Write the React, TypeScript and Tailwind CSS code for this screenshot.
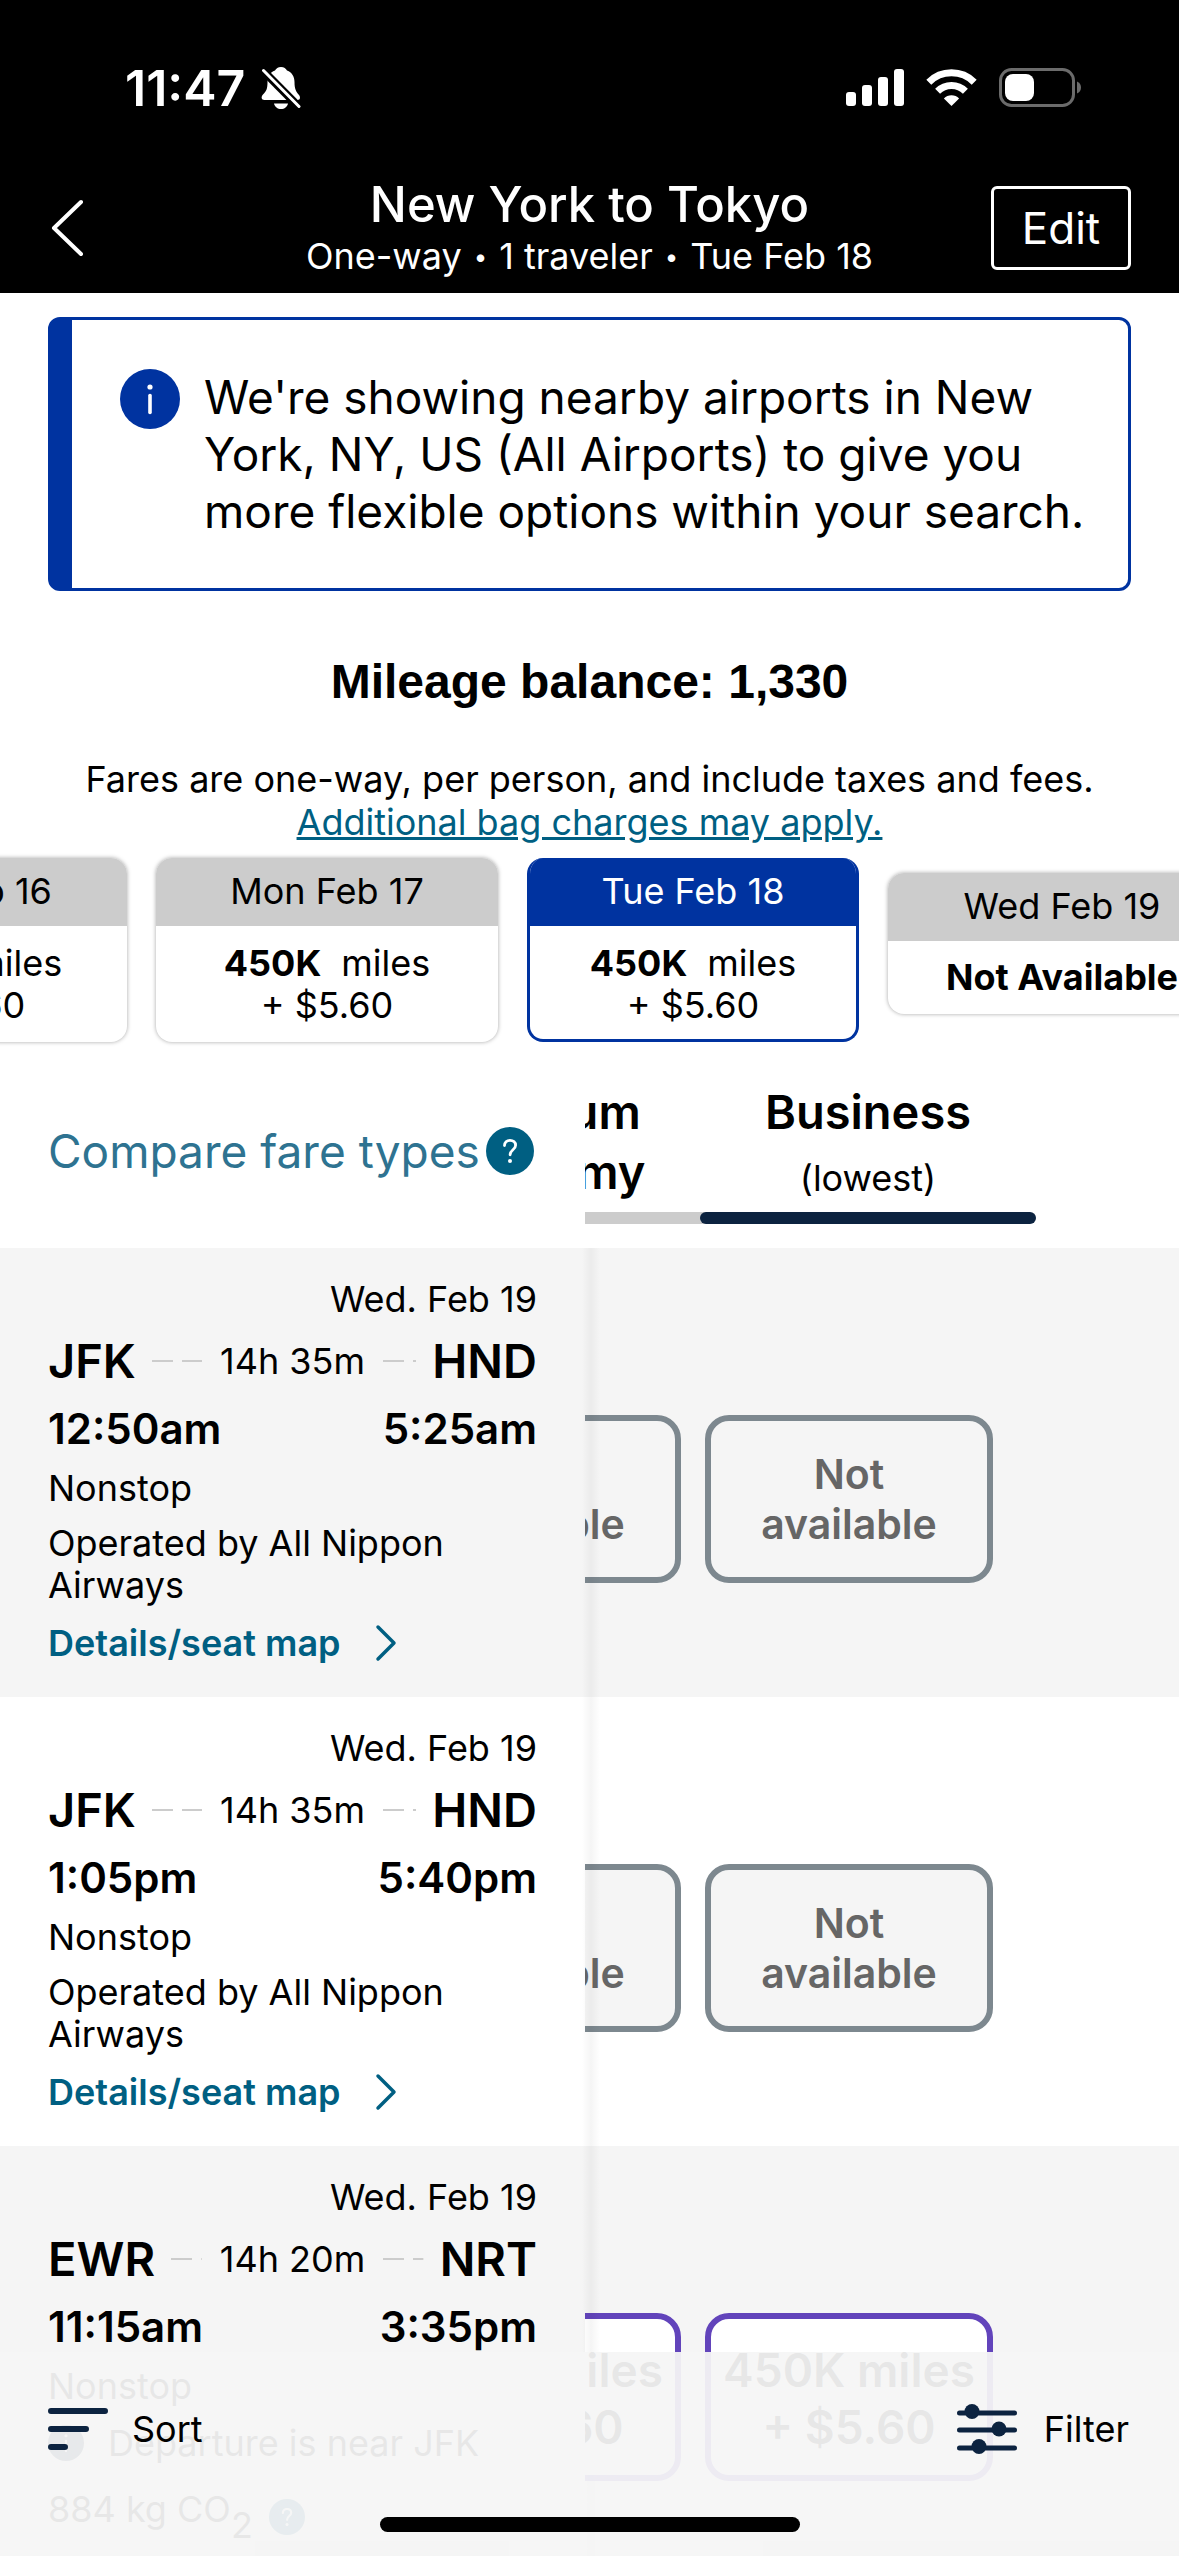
import { useState } from 'react'
import clsx from 'clsx'

interface DateFare {
  day: string
  miles?: string
  taxes?: string
  width: string
}

interface Flight {
  id: number
  arrivalDate: string
  from: string
  to: string
  duration: string
  departs: string
  arrives: string
  operator?: string
  notice?: string
  co2?: string
  miles?: string
  taxes?: string
}

const dateFares: DateFare[] = [
  { day: 'Sun Feb 16', miles: '450K', taxes: '+ $5.60', width: 'w-[336px]' },
  { day: 'Mon Feb 17', miles: '450K', taxes: '+ $5.60', width: 'w-[342px]' },
  { day: 'Tue Feb 18', miles: '450K', taxes: '+ $5.60', width: 'w-[332px]' },
  { day: 'Wed Feb 19', width: 'w-[348px]' },
]

const flights: Flight[] = [
  {
    id: 1,
    arrivalDate: 'Wed. Feb 19',
    from: 'JFK',
    to: 'HND',
    duration: '14h 35m',
    departs: '12:50am',
    arrives: '5:25am',
    operator: 'Operated by All Nippon Airways',
  },
  {
    id: 2,
    arrivalDate: 'Wed. Feb 19',
    from: 'JFK',
    to: 'HND',
    duration: '14h 35m',
    departs: '1:05pm',
    arrives: '5:40pm',
    operator: 'Operated by All Nippon Airways',
  },
  {
    id: 3,
    arrivalDate: 'Wed. Feb 19',
    from: 'EWR',
    to: 'NRT',
    duration: '14h 20m',
    departs: '11:15am',
    arrives: '3:35pm',
    notice: 'Departure is near JFK',
    co2: '884 kg CO',
    miles: '450K miles',
    taxes: '+ $5.60',
  },
]

function BellOffIcon() {
  return (
    <svg width="40" height="44" viewBox="0 0 40 44" fill="#fff">
      <path d="M20 1c3 0 5 1.600 6 3.500 5 2 7.500 6 7.500 11.500 0 7 1.500 9.500 4.500 13 1.500 1.800 1.500 5-1.500 5H3.500C0 34 0 30.500 2 28.500c3.500-3.500 4.500-6 4.500-12.500C6.500 10.500 9 6.500 14 4.500 15 2.600 17 1 20 1z" />
      <path d="M13 37.500h14c-.8 3.500-3.500 5.500-7 5.500s-6.200-2-7-5.500z" />
      <path d="M1 3.500L39 42" stroke="#000" strokeWidth="8" />
      <path d="M2.500 4.500L38 40.500" stroke="#fff" strokeWidth="3" strokeLinecap="round" />
    </svg>
  )
}

function SignalIcon() {
  return (
    <svg width="58" height="38" viewBox="0 0 58 38" fill="#fff">
      <rect x="0" y="23" width="10" height="14" rx="3" />
      <rect x="16" y="16" width="10" height="21" rx="3" />
      <rect x="32" y="8" width="10" height="29" rx="3" />
      <rect x="48" y="0" width="10" height="37" rx="3" />
    </svg>
  )
}

function WifiIcon() {
  return (
    <svg width="51" height="38" viewBox="0 0 51 38" fill="none" stroke="#fff" strokeWidth="7">
      <path d="M2.800 13.200a32.200 32.200 0 0 1 45.400 0" />
      <path d="M11.600 22.200a19.700 19.700 0 0 1 27.800 0" />
      <path d="M25.500 37l-7.600-7.600a10.800 10.800 0 0 1 15.200 0z" fill="#fff" stroke="none" />
    </svg>
  )
}

function BatteryIcon() {
  return (
    <svg width="83" height="40" viewBox="0 0 83 40" fill="none">
      <rect x="1.500" y="1.500" width="73" height="36" rx="11" stroke="#6b6b6b" strokeWidth="3" />
      <rect x="6" y="6" width="29" height="27" rx="8" fill="#fff" />
      <path d="M78 13.500c2.500 1 4 3.200 4 6s-1.500 5-4 6z" fill="#6b6b6b" />
    </svg>
  )
}

function InfoIcon({ className }: { className: string }) {
  return (
    <svg className={className} viewBox="0 0 60 60">
      <circle cx="30" cy="30" r="30" fill="currentColor" />
      <circle cx="30" cy="18" r="2.600" fill="#fff" />
      <path d="M30 26.500v17" stroke="#fff" strokeWidth="3.600" strokeLinecap="round" />
    </svg>
  )
}

function HelpIcon({ className }: { className: string }) {
  return (
    <svg className={className} viewBox="0 0 48 48">
      <circle cx="24" cy="24" r="24" fill="#005f82" />
      <path
        d="M18.500 18.500c0-3.200 2.300-5.200 5.500-5.200s5.600 1.900 5.600 4.900c0 4.700-5.500 4.400-5.500 9.600"
        fill="none"
        stroke="#fff"
        strokeWidth="2.800"
        strokeLinecap="round"
      />
      <circle cx="24" cy="34" r="2" fill="#fff" />
    </svg>
  )
}

// thin dashed rule on both sides of the duration
function Dashes() {
  return (
    <svg className="h-[2px] min-w-0 flex-1" preserveAspectRatio="none">
      <line x1="0" y1="1" x2="100%" y2="1" stroke="#ccc" strokeWidth="2" strokeDasharray="21 9" />
    </svg>
  )
}

function DateCard({ fare, selected, onSelect }: { fare: DateFare; selected: boolean; onSelect: () => void }) {
  return (
    <button
      onClick={onSelect}
      className={clsx(
        'shrink-0 overflow-hidden rounded-2xl bg-white text-[36px] leading-[42px]',
        fare.width,
        fare.miles ? '' : 'mt-[15px]',
        selected ? 'border-3 border-t-0 border-[#0033a0]' : 'shadow-[0_0_4px_rgba(0,0,0,0.35)]'
      )}
    >
      <div className={clsx('h-[68px] pt-3', selected ? 'bg-[#0033a0] text-white' : 'bg-[#ccc]')}>{fare.day}</div>
      {fare.miles ? (
        <div className={clsx('pt-4', selected ? 'pb-[13px]' : 'pb-4')}>
          <div className="flex justify-center gap-5">
            <span className="font-bold">{fare.miles}</span>
            <span>miles</span>
          </div>
          <div>{fare.taxes}</div>
        </div>
      ) : (
        <div className="pt-[15px] pb-4 font-bold">Not Available</div>
      )}
    </button>
  )
}

function FareBox({ flight }: { flight: Flight }) {
  if (!flight.miles) {
    return (
      <div className="flex h-[168px] w-[288px] flex-col justify-center rounded-3xl border-6 border-[#7d888f] bg-[#f5f5f5] text-center text-[41px] leading-[50px] font-semibold text-[#666]">
        <div>Not</div>
        <div>available</div>
      </div>
    )
  }
  return (
    <button className="flex h-[168px] w-[288px] flex-col items-center justify-center rounded-3xl border-6 border-[#6244bb] bg-white pt-1 text-[46px] leading-[57px] font-semibold whitespace-nowrap">
      <span>{flight.miles}</span>
      <span>{flight.taxes}</span>
    </button>
  )
}

function FlightRow({ flight }: { flight: Flight }) {
  return (
    <div className="flex odd:bg-[#f5f5f5]">
      <div className="flex w-[585px] shrink-0 flex-col gap-[11px] pt-[30px] pr-12 pb-7 pl-12 text-[36px] leading-[42px]">
        <div className="text-right">{flight.arrivalDate}</div>
        <div className="grid h-[60px] grid-cols-[1fr_auto_1fr] items-center gap-[18px]">
          <div className="flex min-w-0 items-center gap-4">
            <span className="text-[47px] font-semibold">{flight.from}</span>
            <Dashes />
          </div>
          <span>{flight.duration}</span>
          <div className="flex min-w-0 items-center gap-4">
            <Dashes />
            <span className="text-[47px] font-semibold">{flight.to}</span>
          </div>
        </div>
        <div className="flex justify-between text-[42px] leading-[54px] font-semibold">
          <span>{flight.departs}</span>
          <span>{flight.arrives}</span>
        </div>
        <div>Nonstop</div>
        {flight.operator && <div className="w-[440px] pt-0.5">{flight.operator}</div>}
        {flight.notice && (
          <div className="flex h-[50px] items-center gap-6">
            <InfoIcon className="size-9 text-[#0c2340]" />
            {flight.notice}
          </div>
        )}
        {flight.co2 ? (
          <div className="flex h-[60px] items-center">
            <span>{flight.co2}</span>
            <span className="pt-8">2</span>
            <HelpIcon className="mt-4 ml-4 size-9" />
          </div>
        ) : (
          <a href="#details" className="flex items-center gap-[34px] leading-[52px] font-semibold text-[#005f82]">
            Details/seat map
            <svg width="22" height="38" viewBox="0 0 22 38" fill="none" stroke="currentColor" strokeWidth="3.500">
              <path d="M3 3l16 16L3 35" strokeLinecap="round" strokeLinejoin="round" />
            </svg>
          </a>
        )}
      </div>
      <div className="min-w-0 flex-1 overflow-hidden">
        <div className="-ml-[192px] flex gap-6 pt-[167px]">
          <FareBox flight={flight} />
          <FareBox flight={flight} />
        </div>
      </div>
    </div>
  )
}

export default function App() {
  const [selectedDay, setSelectedDay] = useState('Tue Feb 18')

  return (
    <div className="relative flex h-screen flex-col overflow-hidden bg-white font-['Inter','Liberation_Sans',sans-serif] text-black">
      <header className="shrink-0 bg-black text-white">
        <div className="flex h-[176px] items-center justify-between pr-[97px] pl-[125px]">
          <div className="flex items-center gap-4">
            <span className="text-[50px] leading-[60px] font-semibold">11:47</span>
            <BellOffIcon />
          </div>
          <div className="flex items-center gap-[22px]">
            <SignalIcon />
            <WifiIcon />
            <BatteryIcon />
          </div>
        </div>
        <div className="grid grid-cols-[1fr_auto_1fr] items-center px-12 pb-[14px]">
          <button aria-label="Back" className="justify-self-start">
            <svg width="38" height="58" viewBox="0 0 38 58" fill="none" stroke="#fff" strokeWidth="4">
              <path d="M33 3L6 29l27 26" strokeLinecap="round" strokeLinejoin="round" />
            </svg>
          </button>
          <div className="text-center">
            <h1 className="text-[49px] leading-[58px] font-medium">New York to Tokyo</h1>
            <p className="flex items-center justify-center gap-3 text-[36px] leading-[45px]">
              <span>One-way</span>
              <span className="text-[24px]">•</span>
              <span>1 traveler</span>
              <span className="text-[24px]">•</span>
              <span>Tue Feb 18</span>
            </p>
          </div>
          <button className="h-[84px] w-[140px] justify-self-end rounded-md border-3 border-white text-[44px]">
            Edit
          </button>
        </div>
      </header>

      <main className="min-h-0 flex-1">
        <div className="mx-12 mt-6 flex gap-6 rounded-xl border-3 border-l-24 border-[#0033a0] pt-[49px] pb-12 pl-12">
          <InfoIcon className="size-[60px] shrink-0 text-[#0033a0]" />
          <p className="max-w-[900px] text-[46px] leading-[57px]">
            We're showing nearby airports in New York, NY, US (All Airports) to give you more flexible options within
            your search.
          </p>
        </div>

        <h2 className="mt-[63px] text-center font-['Liberation_Sans',sans-serif] text-[48px] leading-[56px] font-bold">
          Mileage balance: 1,330
        </h2>

        <div className="mt-12 text-center text-[36px] leading-[43px]">
          <p>Fares are one-way, per person, and include taxes and fees.</p>
          <a href="#bags" className="text-[#005f82] underline">
            Additional bag charges may apply.
          </a>
        </div>

        <div className="overflow-hidden pt-[14px] pb-4">
          <div className="-ml-[209px] flex items-start gap-[29px]">
            {dateFares.map((fare) => (
              <DateCard
                key={fare.day}
                fare={fare}
                selected={fare.day === selectedDay}
                onSelect={() => setSelectedDay(fare.day)}
              />
            ))}
          </div>
        </div>

        <div className="flex">
          <div className="flex w-[585px] shrink-0 items-center gap-1.5 pb-1 pl-12 text-[46px] text-[#2e7391]">
            <a href="#compare">Compare fare types</a>
            <HelpIcon className="size-12" />
          </div>
          <div className="min-w-0 flex-1 overflow-hidden pt-6 pb-6">
            <div className="-ml-[221px] flex">
              <div className="w-[336px] shrink-0 text-center">
                <div className="h-[130px] pl-4 text-[47px] leading-[60px] font-semibold">
                  <div>Premium</div>
                  <div>Economy</div>
                </div>
                <div className="-mr-2 h-3 bg-[#ccc]" />
              </div>
              <div className="relative w-[336px] shrink-0 text-center">
                <div className="h-[130px]">
                  <div className="text-[47px] leading-[60px] font-semibold">Business</div>
                  <div className="pt-1.5 text-[36px] leading-[60px]">(lowest)</div>
                </div>
                <div className="h-3 rounded-full bg-[#0c2340]" />
              </div>
            </div>
          </div>
        </div>

        <div className="relative">
          {flights.map((flight) => (
            <FlightRow key={flight.id} flight={flight} />
          ))}
          <div className="pointer-events-none absolute inset-y-0 left-[582px] w-[18px] bg-linear-to-r from-transparent via-black/4 to-transparent" />
        </div>
      </main>

      <footer className="absolute inset-x-0 bottom-0 bg-[#f5f5f5]/94 pt-[50px] text-[36px] leading-[54px]">
        <div className="flex justify-between pr-[50px] pl-12">
          <button className="flex items-center gap-6">
            <svg width="60" height="42" viewBox="0 0 60 42" stroke="#0c2340" strokeWidth="6" strokeLinecap="round">
              <path d="M3 3h54M3 21h35M3 39h14" />
            </svg>
            Sort
          </button>
          <button className="flex items-center gap-[27px]">
            <svg width="60" height="50" viewBox="0 0 60 50" fill="#0c2340" stroke="#0c2340" strokeLinecap="round">
              <path d="M2.500 9h55M2.500 26h55M2.500 44h55" strokeWidth="5" />
              <g stroke="none">
                <circle cx="15" cy="7.500" r="7.500" />
                <circle cx="42" cy="25" r="7.500" />
                <circle cx="22" cy="42.500" r="7.500" />
              </g>
            </svg>
            Filter
          </button>
        </div>
        <div className="mx-auto mt-[61px] mb-6 h-[15px] w-[420px] rounded-full bg-black" />
      </footer>
    </div>
  )
}
